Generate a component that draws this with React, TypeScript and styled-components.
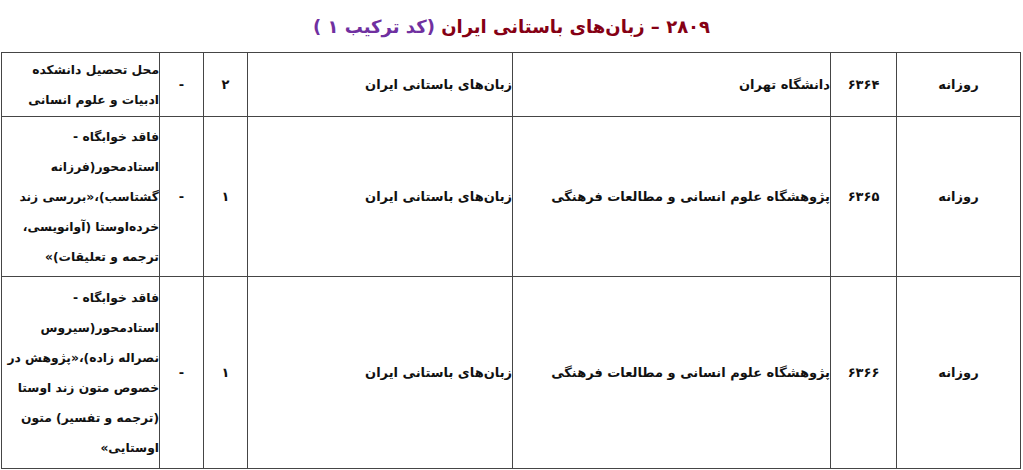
import React from 'react'
import styled, { createGlobalStyle } from 'styled-components'

const GlobalStyle = createGlobalStyle`
  html, body {
    margin: 0;
    padding: 0;
    background: #ffffff;
  }
  body {
    font-family: 'DejaVu Sans', 'Noto Sans', sans-serif;
    color: #111;
  }
`

const Page = styled.div`
  width: 1023px;
  height: 470px;
  overflow: hidden;
  direction: rtl;
`

const Title = styled.h1`
  margin: 0;
  height: 52px;
  display: flex;
  align-items: center;
  justify-content: center;
  font-size: 18px;
  font-weight: bold;
  color: #850014;
  white-space: pre;
`

const TitleCode = styled.span`
  color: #7030a0;
`

const Table = styled.table`
  border-collapse: collapse;
  width: 1019px;
  margin-right: 2px;
  table-layout: fixed;
  font-size: 13px;
  font-weight: bold;
`

const Col = styled.col<{ $w: number }>`
  width: ${p => p.$w}px;
`

const Row = styled.tr<{ $h: number }>`
  height: ${p => p.$h}px;
`

const Cell = styled.td<{ $align?: 'center' | 'right' }>`
  border: 1px solid #454545;
  padding: 0;
  vertical-align: middle;
  text-align: ${p => p.$align ?? 'center'};
  white-space: nowrap;
  line-height: 30px;
  overflow: hidden;
`

const Note = styled(Cell)`
  text-align: right;
  font-size: 12.3px;
`

type Entry = {
  mode: string
  code: string
  place: string
  field: string
  count: string
  note: string[]
  h: number
}

const widths = [124, 66, 318, 265, 44, 44, 158]

const rows: Entry[] = [
  {
    mode: 'روزانه',
    code: '۶۳۶۴',
    place: 'دانشگاه تهران',
    field: 'زبان‌های باستانی ایران',
    count: '۲',
    note: ['محل تحصیل دانشکده', 'ادبیات و علوم انسانی'],
    h: 64,
  },
  {
    mode: 'روزانه',
    code: '۶۳۶۵',
    place: 'پژوهشگاه علوم انسانی و مطالعات فرهنگی',
    field: 'زبان‌های باستانی ایران',
    count: '۱',
    note: [
      'فاقد خوابگاه -',
      'استادمحور(فرزانه',
      'گشتاسب)،«بررسی زند',
      'خرده‌اوستا (آوانویسی،',
      'ترجمه و تعلیقات)»',
    ],
    h: 160,
  },
  {
    mode: 'روزانه',
    code: '۶۳۶۶',
    place: 'پژوهشگاه علوم انسانی و مطالعات فرهنگی',
    field: 'زبان‌های باستانی ایران',
    count: '۱',
    note: [
      'فاقد خوابگاه -',
      'استادمحور(سیروس',
      'نصراله زاده)،«پژوهش در',
      'خصوص متون زند اوستا',
      '(ترجمه و تفسیر) متون',
      'اوستایی»',
    ],
    h: 192,
  },
]

export default function App() {
  return (
    <Page>
      <GlobalStyle />
      <Title>
        <span>۲۸۰۹ – زبان‌های باستانی ایران </span>
        <TitleCode>(کد ترکیب ۱ )</TitleCode>
      </Title>
      <Table>
        <colgroup>
          {widths.map((w, i) => (
            <Col key={i} $w={w} />
          ))}
        </colgroup>
        <tbody>
          {rows.map(r => (
            <Row key={r.code} $h={r.h}>
              <Cell>{r.mode}</Cell>
              <Cell>{r.code}</Cell>
              <Cell $align="right">{r.place}</Cell>
              <Cell $align="right">{r.field}</Cell>
              <Cell>{r.count}</Cell>
              <Cell>-</Cell>
              <Note>
                {r.note.map((line, i) => (
                  <React.Fragment key={i}>
                    {i > 0 && <br />}
                    {line}
                  </React.Fragment>
                ))}
              </Note>
            </Row>
          ))}
        </tbody>
      </Table>
    </Page>
  )
}
